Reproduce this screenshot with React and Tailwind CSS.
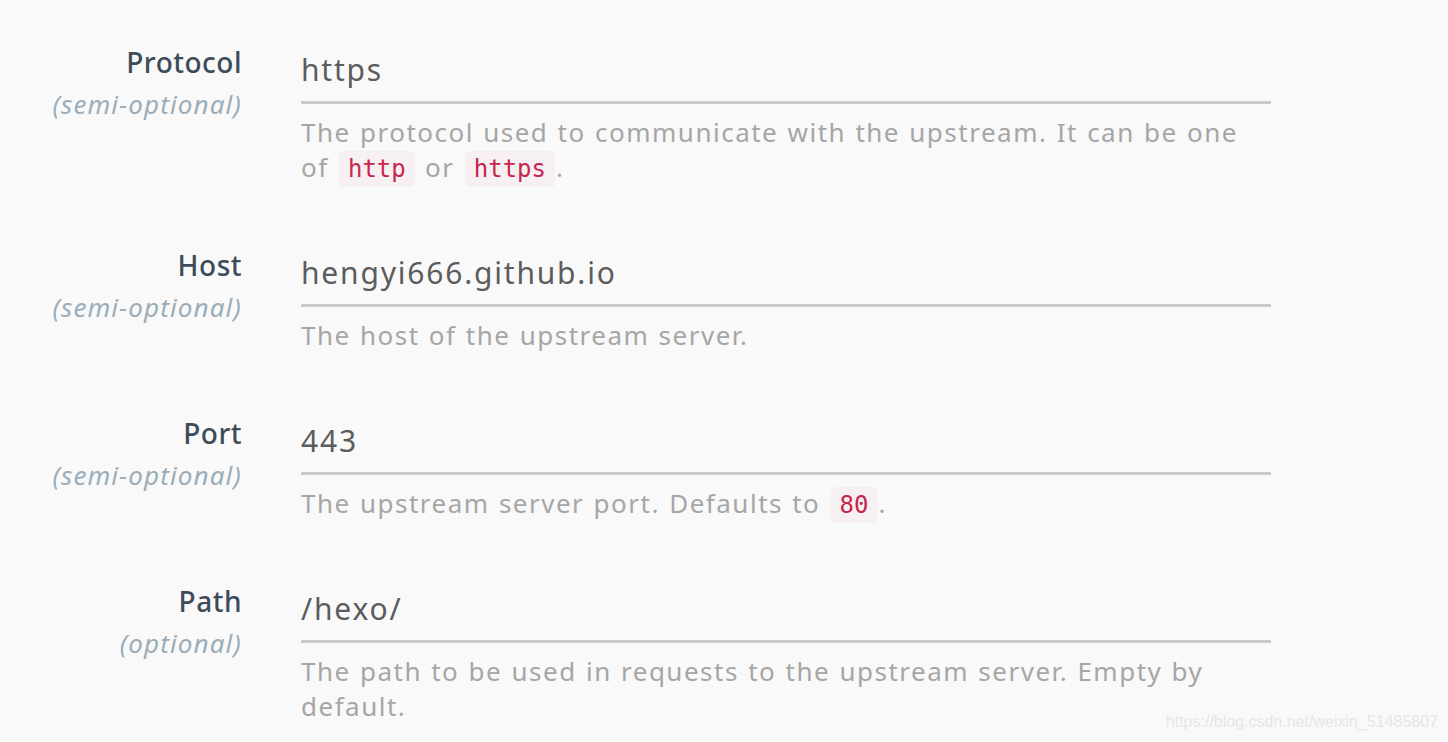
const fields = [
  {
    label: 'Protocol',
    note: '(semi-optional)',
    value: 'https',
    desc: (
      <>
        The protocol used to communicate with the upstream. It can be one of <Code>http</Code> or <Code>https</Code>.
      </>
    ),
  },
  {
    label: 'Host',
    note: '(semi-optional)',
    value: 'hengyi666.github.io',
    desc: <>The host of the upstream server.</>,
  },
  {
    label: 'Port',
    note: '(semi-optional)',
    value: '443',
    desc: (
      <>
        The upstream server port. Defaults to <Code>80</Code>.
      </>
    ),
  },
  {
    label: 'Path',
    note: '(optional)',
    value: '/hexo/',
    desc: <>The path to be used in requests to the upstream server. Empty by default.</>,
  },
];

function Code({ children }) {
  return (
    <code className="mx-[1px] rounded-[4px] bg-[#f7f0f2] px-[9px] py-[4px] font-['DejaVu_Sans_Mono',monospace] text-[24px] leading-none tracking-normal text-[#c7254e]">
      {children}
    </code>
  );
}

function Field({ label, note, value, desc }) {
  return (
    <div className="flex gap-[59px]">
      <div className="w-[242px] shrink-0 text-right">
        <div className="text-[28px] leading-[34px] font-medium tracking-[0.5px] text-[#3d4c5a]">{label}</div>
        <div className="text-[26px] leading-[50px] italic tracking-[1.1px] text-[#9badb9]">{note}</div>
      </div>
      <div className="w-[970px]">
        <div className="border-b-[3px] border-[#c9c9c9] pt-[5px] pb-[11px] text-[30px] leading-[40px] tracking-[1.8px] text-[#5c5c5c]">
          {value}
        </div>
        <p className="mt-[11px] text-[26px] leading-[35px] tracking-[1.5px] [word-spacing:1px] text-[#a6a6a6]">{desc}</p>
      </div>
    </div>
  );
}

export default function App() {
  return (
    <div className="relative h-[742px] w-[1448px] overflow-hidden bg-[#f9f9f9] font-['Noto_Sans',sans-serif]">
      <div className="flex flex-col gap-[63px] pt-[45px]">
        {fields.map((f) => (
          <Field key={f.label} {...f} />
        ))}
      </div>
      <div className="absolute right-[10px] bottom-[8px] font-['Liberation_Sans',sans-serif] text-[16px] text-[#e6e6e6]">
        https://blog.csdn.net/weixin_51485807
      </div>
    </div>
  );
}
